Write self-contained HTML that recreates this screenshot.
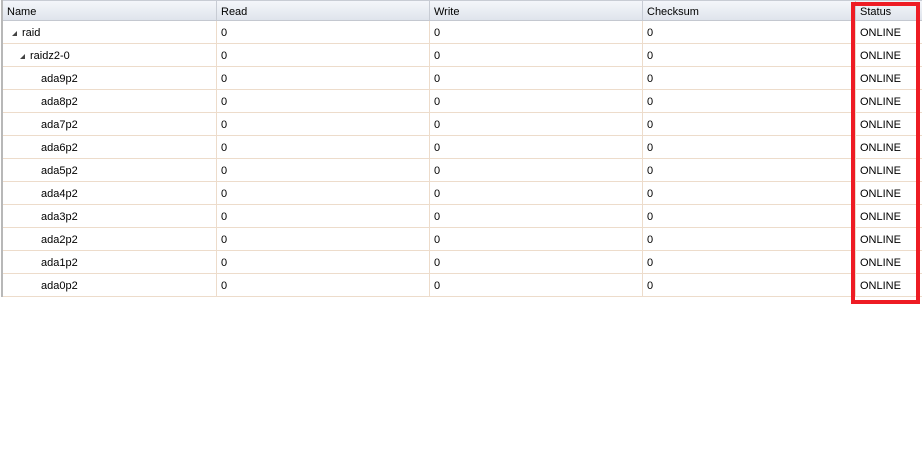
<!DOCTYPE html>
<html><head><style>
body{margin:0;width:922px;height:459px;background:#fff;font-family:"Liberation Sans","DejaVu Sans",sans-serif;font-size:11px;color:#000;position:relative;overflow:hidden}
.grid{position:absolute;left:1px;top:0;width:921px;border-left:2px solid #b8b8b8}
.hdr{height:21px;background:linear-gradient(#f4f6fa,#dfe4ec);border-top:1px solid #c8ccd4;border-bottom:1px solid #c4c8d0;box-sizing:border-box;position:relative}
.row{height:23px;border-bottom:1px solid #eddccb;box-sizing:border-box;position:relative}
.c{position:absolute;top:0;height:100%;line-height:22px;box-sizing:border-box;padding-left:4px;white-space:nowrap}
.row .c{line-height:24px}
.c1{left:0;width:213px}
.c2{left:213px;width:213px;border-left:1px solid #eddccb}
.c3{left:426px;width:213px;border-left:1px solid #eddccb}
.c4{left:639px;width:213px;border-left:1px solid #eddccb}
.c5{left:852px;width:67px;border-left:1px solid #eddccb}
.hdr .c2,.hdr .c3,.hdr .c4,.hdr .c5{border-left:1px solid #c8ccd4}
.tri{display:inline-block;width:0;height:0;border-left:5px solid transparent;border-bottom:5px solid #444;margin-right:5px;vertical-align:0}
.red{position:absolute;left:851px;top:2px;width:69px;height:302px;border:4px solid #ee1c24;box-sizing:border-box}
</style></head><body>
<div class="grid">
<div class="hdr"><div class="c c1">Name</div><div class="c c2">Read</div><div class="c c3">Write</div><div class="c c4">Checksum</div><div class="c c5">Status</div></div>
<div class="row"><div class="c c1" style="padding-left:9px"><span class="tri"></span>raid</div><div class="c c2">0</div><div class="c c3">0</div><div class="c c4">0</div><div class="c c5">ONLINE</div></div>
<div class="row"><div class="c c1" style="padding-left:17px"><span class="tri"></span>raidz2-0</div><div class="c c2">0</div><div class="c c3">0</div><div class="c c4">0</div><div class="c c5">ONLINE</div></div>
<div class="row"><div class="c c1" style="padding-left:38px">ada9p2</div><div class="c c2">0</div><div class="c c3">0</div><div class="c c4">0</div><div class="c c5">ONLINE</div></div>
<div class="row"><div class="c c1" style="padding-left:38px">ada8p2</div><div class="c c2">0</div><div class="c c3">0</div><div class="c c4">0</div><div class="c c5">ONLINE</div></div>
<div class="row"><div class="c c1" style="padding-left:38px">ada7p2</div><div class="c c2">0</div><div class="c c3">0</div><div class="c c4">0</div><div class="c c5">ONLINE</div></div>
<div class="row"><div class="c c1" style="padding-left:38px">ada6p2</div><div class="c c2">0</div><div class="c c3">0</div><div class="c c4">0</div><div class="c c5">ONLINE</div></div>
<div class="row"><div class="c c1" style="padding-left:38px">ada5p2</div><div class="c c2">0</div><div class="c c3">0</div><div class="c c4">0</div><div class="c c5">ONLINE</div></div>
<div class="row"><div class="c c1" style="padding-left:38px">ada4p2</div><div class="c c2">0</div><div class="c c3">0</div><div class="c c4">0</div><div class="c c5">ONLINE</div></div>
<div class="row"><div class="c c1" style="padding-left:38px">ada3p2</div><div class="c c2">0</div><div class="c c3">0</div><div class="c c4">0</div><div class="c c5">ONLINE</div></div>
<div class="row"><div class="c c1" style="padding-left:38px">ada2p2</div><div class="c c2">0</div><div class="c c3">0</div><div class="c c4">0</div><div class="c c5">ONLINE</div></div>
<div class="row"><div class="c c1" style="padding-left:38px">ada1p2</div><div class="c c2">0</div><div class="c c3">0</div><div class="c c4">0</div><div class="c c5">ONLINE</div></div>
<div class="row"><div class="c c1" style="padding-left:38px">ada0p2</div><div class="c c2">0</div><div class="c c3">0</div><div class="c c4">0</div><div class="c c5">ONLINE</div></div>
</div>
<div class="red"></div>
</body></html>
